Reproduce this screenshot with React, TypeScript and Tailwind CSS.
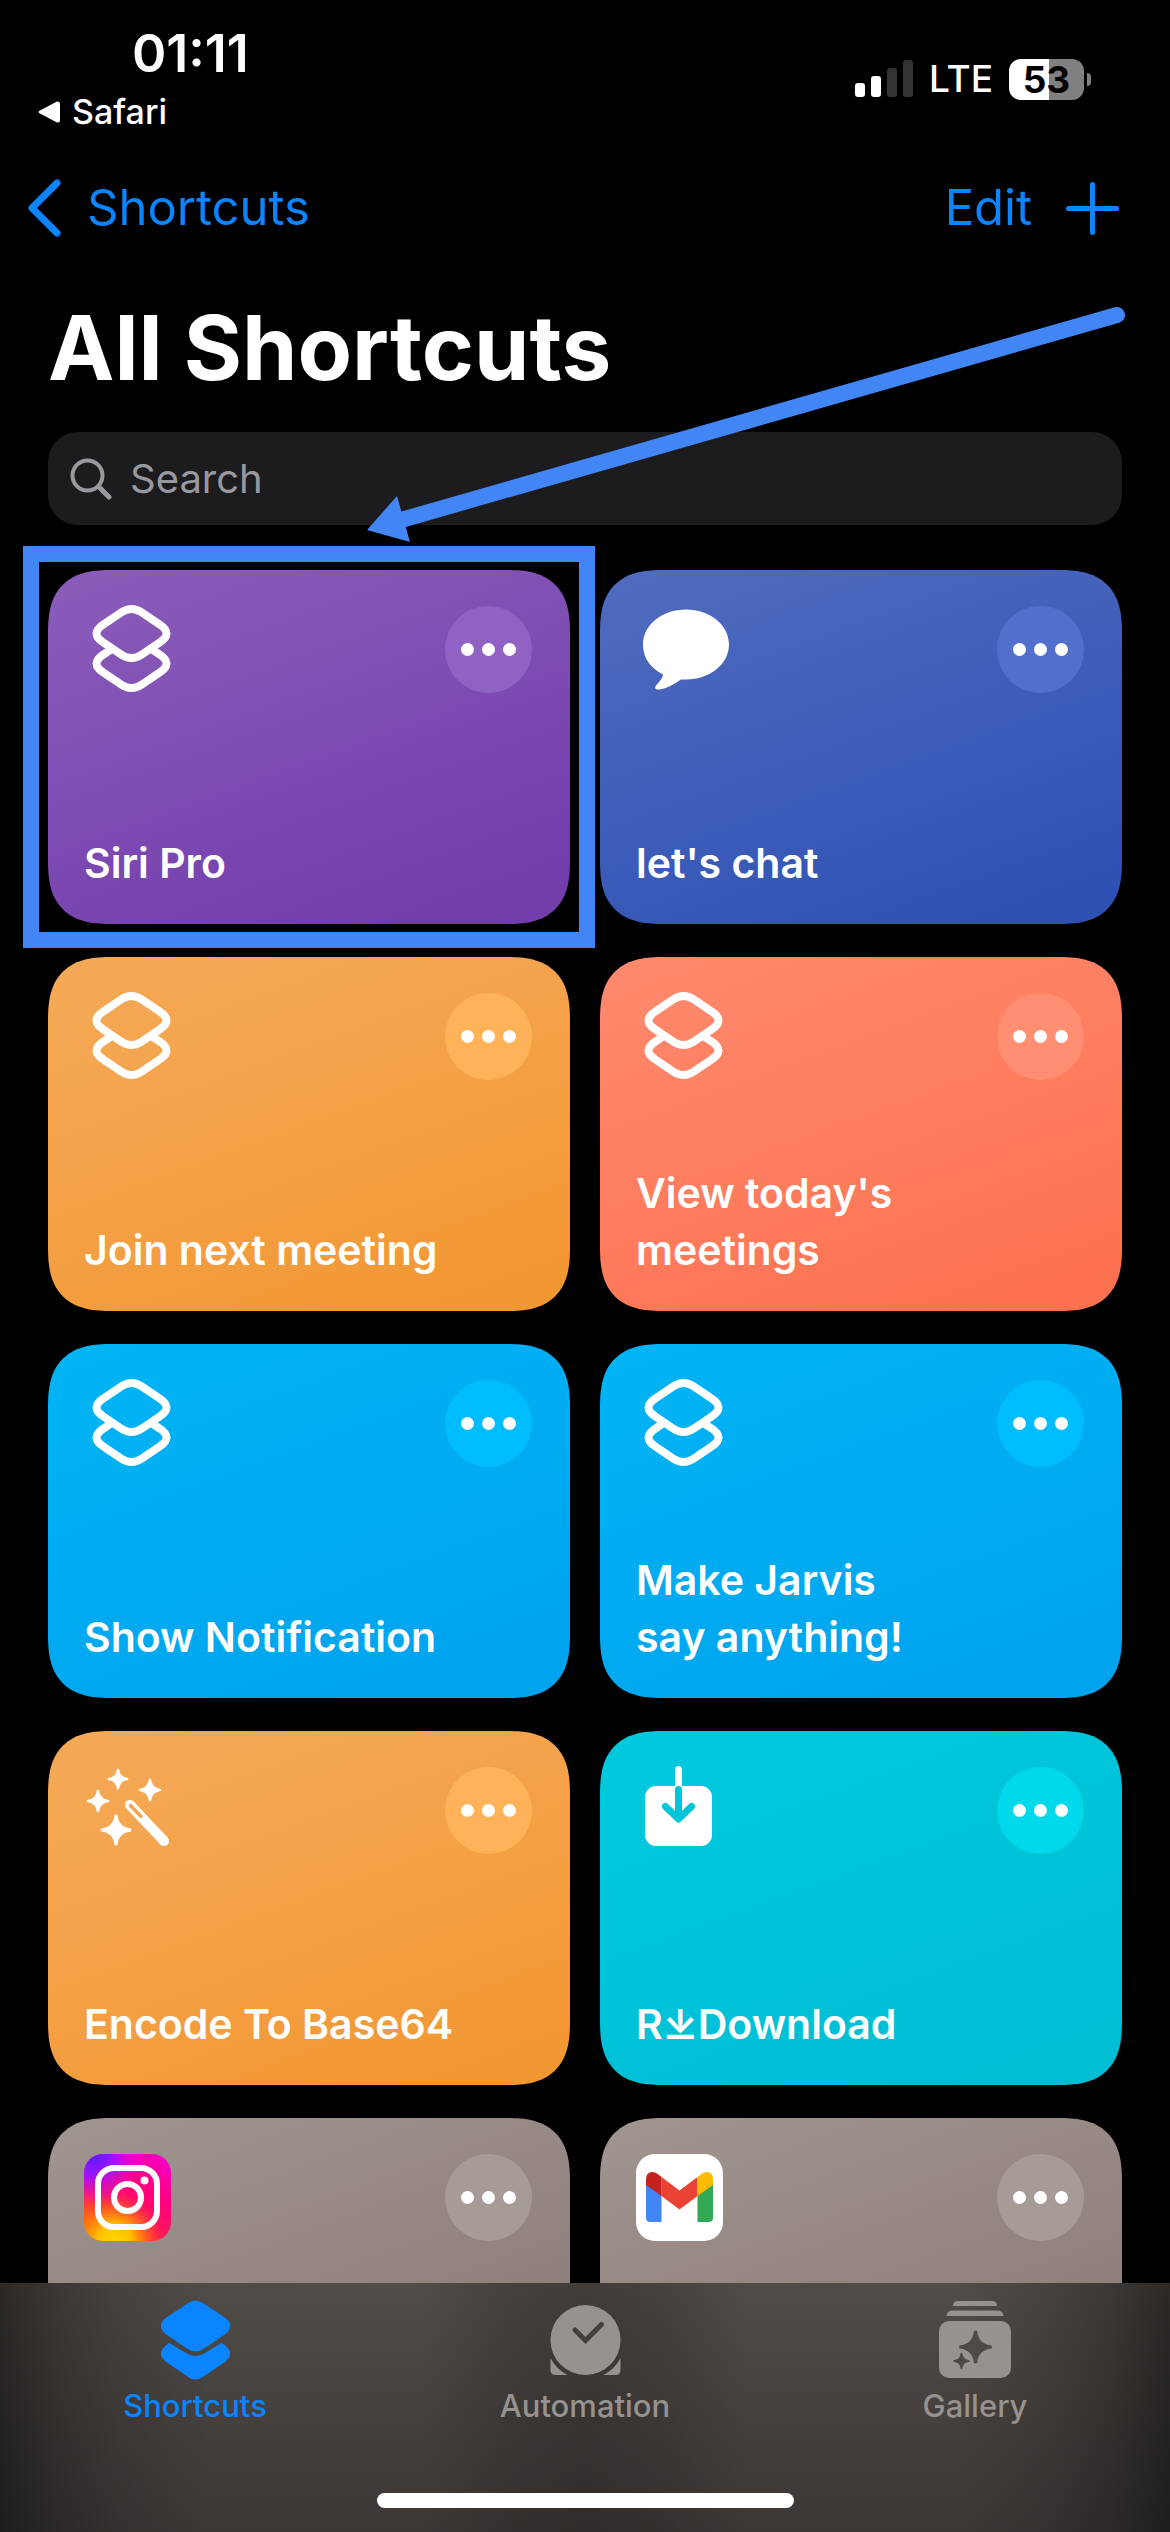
import type { ReactNode } from "react";

function star(cx: number, cy: number, r: number) {
  const k = r * 0.18;
  const e = r * 0.1;
  return `M${cx - e} ${cy - r} Q${cx} ${cy - r * 1.06} ${cx + e} ${cy - r} Q${cx + k} ${cy - k} ${cx + r} ${cy - e} Q${cx + r * 1.06} ${cy} ${cx + r} ${cy + e} Q${cx + k} ${cy + k} ${cx + e} ${cy + r} Q${cx} ${cy + r * 1.06} ${cx - e} ${cy + r} Q${cx - k} ${cy + k} ${cx - r} ${cy + e} Q${cx - r * 1.06} ${cy} ${cx - r} ${cy - e} Q${cx - k} ${cy - k} ${cx - e} ${cy - r}Z`;
}

function LayersIcon() {
  return (
    <svg viewBox="0 0 87 87" className="size-[87px] overflow-visible" fill="none" stroke="white" strokeWidth="8" aria-hidden="true">
      <path d="M37.500 6.300Q47.500-.4 57.500 6.300L76 18.800Q89 27.500 76 36.200L57.500 48.700Q47.500 55.400 37.500 48.700L19 36.200Q6 27.500 19 18.800Z" />
      <path d="M27 43.500L19 48.800Q6 57.500 19 66.200L37.500 78.700Q47.500 85.400 57.500 78.700L76 66.200Q89 57.500 76 48.800L68 43.500" />
    </svg>
  );
}

function BubbleIcon() {
  return (
    <svg viewBox="0 0 87 87" className="size-[87px] overflow-visible" fill="white" aria-hidden="true">
      <path d="M50 3.5C74 3.5 93 19 93 38.5S74 73.5 50 73.5Q47 73.5 45 73.4Q33 82 24 83.4Q17 84 20 79.5Q27 72 27 68.5Q7 58 7 38.5C7 19 26 3.5 50 3.5Z" />
    </svg>
  );
}

function WandIcon() {
  return (
    <svg viewBox="0 0 87 87" className="size-[87px] overflow-visible" fill="white" aria-hidden="true">
      <path d={star(32, 63, 15)} />
      <path d={star(14, 34, 11)} />
      <path d={star(34, 12, 10)} />
      <path d={star(66, 23, 11)} />
      <path d="M46 38L80 74" stroke="white" strokeWidth="10" strokeLinecap="round" />
      <path d="M46.500 38.500L57 49.500" stroke="#f4a551" strokeWidth="3.500" strokeLinecap="round" />
    </svg>
  );
}

function DownloadIcon() {
  return (
    <svg viewBox="0 0 87 87" className="size-[87px] overflow-visible" fill="none" strokeWidth="7" strokeLinecap="round" strokeLinejoin="round" aria-hidden="true">
      <path d="M42.500 2.500V24" stroke="white" />
      <rect x="9" y="19" width="67" height="60" rx="11" fill="white" />
      <path d="M42.500 22.500V51M29.500 39.500L42.500 52L55.500 39.500" stroke="#00c5da" />
    </svg>
  );
}

function InstagramIcon() {
  return (
    <svg viewBox="0 0 87 87" className="size-[87px]" aria-hidden="true">
      <defs>
        <linearGradient id="igBase" x1="0.1" y1="1" x2="0.8" y2="0">
          <stop offset="0" stopColor="#ff7a00" />
          <stop offset="0.4" stopColor="#ff1a55" />
          <stop offset="0.7" stopColor="#ff0080" />
          <stop offset="1" stopColor="#f500c0" />
        </linearGradient>
        <radialGradient id="igYellow" cx="0.35" cy="1" r="0.55">
          <stop offset="0" stopColor="#ffd600" />
          <stop offset="0.35" stopColor="#ffc000" />
          <stop offset="1" stopColor="#ff6000" stopOpacity="0" />
        </radialGradient>
        <radialGradient id="igViolet" cx="0.1" cy="0" r="0.6">
          <stop offset="0" stopColor="#5a1cff" />
          <stop offset="0.4" stopColor="#9a14ff" />
          <stop offset="1" stopColor="#f000d8" stopOpacity="0" />
        </radialGradient>
      </defs>
      <rect width="87" height="87" rx="19" fill="url(#igBase)" />
      <rect width="87" height="87" rx="19" fill="url(#igViolet)" />
      <rect width="87" height="87" rx="19" fill="url(#igYellow)" />
      <rect x="14" y="14" width="59" height="59" rx="16" fill="none" stroke="white" strokeWidth="6" />
      <circle cx="43.500" cy="43.500" r="13.500" fill="none" stroke="white" strokeWidth="6" />
      <circle cx="60.500" cy="26.500" r="4" fill="white" />
    </svg>
  );
}

function GmailIcon() {
  return (
    <svg viewBox="0 0 87 87" className="size-[87px]" aria-hidden="true">
      <rect width="87" height="87" rx="19" fill="white" />
      <path d="M10 30L25.500 41V68H14.500Q10 68 10 63.500Z" fill="#4285f4" />
      <path d="M77 30L61.500 41V68H72.500Q77 68 77 63.500Z" fill="#34a853" />
      <path d="M25.500 23L43.500 36.500L61.500 23V42L43.500 55.500L25.500 42Z" fill="#ea4335" />
      <path d="M10 31V25Q10 19 15.500 18Q18.500 17.700 21 19.600L25.500 23V42Z" fill="#c5221f" />
      <path d="M77 31V25Q77 19 71.500 18Q68.500 17.700 66 19.600L61.500 23V42Z" fill="#fbbc04" />
    </svg>
  );
}

type Shortcut = { name: string; icon: ReactNode; card: string; more: string; marked?: boolean };

const shortcuts: Shortcut[] = [
  { name: "Siri Pro", icon: <LayersIcon />, card: "from-[#8b5dba] to-[#723cab]", more: "bg-[#9062c4]", marked: true },
  { name: "let's chat", icon: <BubbleIcon />, card: "from-[#506cbf] to-[#3051b4]", more: "bg-[#5270cb]" },
  { name: "Join next meeting", icon: <LayersIcon />, card: "from-[#f5aa58] to-[#f29833]", more: "bg-[#ffb257]" },
  { name: "View today's\nmeetings", icon: <LayersIcon />, card: "from-[#ff8a6e] to-[#fc7250]", more: "bg-[#ff8e72]" },
  { name: "Show Notification", icon: <LayersIcon />, card: "from-[#02b5f5] to-[#00a3ee]", more: "bg-[#00bdff]" },
  { name: "Make Jarvis\nsay anything!", icon: <LayersIcon />, card: "from-[#02b5f5] to-[#00a3ee]", more: "bg-[#00bdff]" },
  { name: "Encode To Base64", icon: <WandIcon />, card: "from-[#f5aa58] to-[#f29833]", more: "bg-[#ffb257]" },
  { name: "R⤓Download", icon: <DownloadIcon />, card: "from-[#00cade] to-[#00bdd4]", more: "bg-[#00d8eb]" },
  { name: "", icon: <InstagramIcon />, card: "from-[#a09590] to-[#887874]", more: "bg-[#a79b97]" },
  { name: "", icon: <GmailIcon />, card: "from-[#a09590] to-[#887874]", more: "bg-[#a79b97]" },
];

function ShortcutCard({ name, icon, card, more, marked }: Shortcut) {
  return (
    <article className={`relative flex min-h-[354px] flex-col justify-between rounded-[52px] bg-linear-160 supports-[corner-shape:squircle]:rounded-[64px] supports-[corner-shape:squircle]:[corner-shape:superellipse(1.4)] ${card} to-90% pt-9 pr-[38px] pb-8 pl-9`}>
      <div className="flex items-start justify-between">
        {icon}
        <button type="button" aria-label="More options" className={`flex size-[87px] items-center justify-center gap-2 rounded-full ${more}`}>
          <span className="size-[13px] rounded-full bg-white" />
          <span className="size-[13px] rounded-full bg-white" />
          <span className="size-[13px] rounded-full bg-white" />
        </button>
      </div>
      <h2 className="text-[41px] leading-[57px] font-semibold whitespace-pre-line text-white">{name}</h2>
      {marked && <div className="pointer-events-none absolute -inset-x-[25px] -inset-y-[24px] border-16 border-[#4285f4]" />}
    </article>
  );
}

function StatusBar() {
  return (
    <div className="flex items-start justify-between pt-6 pr-[79px] pl-[38px] text-white">
      <div className="flex flex-col gap-2">
        <div className="pl-[94px] text-[52px] leading-[60px] font-semibold">01:11</div>
        <a href="#safari" className="flex items-center gap-3 text-[34px] leading-10 font-medium">
          <svg viewBox="0 0 22 22" className="size-[22px]" fill="white" aria-hidden="true">
            <path d="M2 9.500L18.500.8Q22-.5 22 3V19Q22 22.500 18.500 21.200L2 12.500Q-1 11 2 9.500Z" />
          </svg>
          Safari
        </a>
      </div>
      <div className="flex items-center pt-8">
        <svg viewBox="0 0 58 38" className="h-[38px] w-[58px]" aria-label="Signal: 2 of 4 bars">
          <rect x="0" y="23" width="10" height="14" rx="3" fill="white" />
          <rect x="16" y="16" width="10" height="21" rx="3" fill="white" />
          <rect x="32" y="8" width="10" height="29" rx="3" fill="#333" />
          <rect x="48" y="0" width="10" height="37" rx="3" fill="#333" />
        </svg>
        <span className="pl-4 text-[37px] leading-[46px] font-medium">LTE</span>
        <div className="ml-4 flex items-center gap-[3px]">
          <div className="flex h-[41px] w-[75px] items-center justify-center rounded-[12px] bg-linear-to-r from-white from-53% to-[#808080] to-53% text-[37px] leading-[41px] font-bold text-black">53</div>
          <div className="h-[13px] w-1 rounded-r-full bg-[#808080]" />
        </div>
      </div>
    </div>
  );
}

function PointerArrow() {
  return (
    <svg viewBox="0 0 762 240" className="pointer-events-none absolute -top-[127px] -right-[5px] h-[240px] w-[762px]" aria-hidden="true">
      <path d="M752 10L36 215" stroke="#4285f4" strokeWidth="16" strokeLinecap="round" />
      <path d="M2 225L32 191L45 237Z" fill="#4285f4" />
    </svg>
  );
}

function TabBar() {
  const tab = "flex flex-col items-center gap-2 pt-[17px] text-[31px] leading-9 font-medium";
  return (
    <nav className="relative z-10 shrink-0 bg-linear-to-b from-[#524c48] to-[#3b3735]">
      <div className="bg-[linear-gradient(90deg,#0007_0%,#0004_5%,#0002_10%,#0000_18%,#0000_36%,#0002_43%,#0003_50%,#0002_57%,#0000_64%,#0000_82%,#0002_90%,#0004_95%,#0007_100%)]">
        <div className="grid h-[210px] grid-cols-3 items-start">
          <a href="#shortcuts" aria-current="page" className={`${tab} text-[#0a84ff]`}>
            <svg viewBox="0 0 69 79" className="h-20 w-[69px]" fill="currentColor" aria-hidden="true">
              <path d="M25 4Q34.500-3.500 44 4L64.500 17.500Q74 25.500 64.500 33.500L44 47.500Q34.500 54.500 25 47.500L4.500 33.500Q-5 25.500 4.500 17.500Z" />
              <path d="M8.300 42.300L4.500 45.300Q-5 53.500 4.500 61L25 75Q34.500 83 44 75L64.500 61Q74 53.500 64.500 45.300L60.700 42.300L44 52.500Q34.500 58.500 25 52.500Z" />
            </svg>
            Shortcuts
          </a>
          <a href="#automation" className={`${tab} text-[#969290]`}>
            <svg viewBox="0 0 71 80" className="h-20 w-[71px]" fill="currentColor" aria-hidden="true">
              <path d="M.5 58V70Q.5 75 5.500 75H17.500Q6 69 .5 58Z" />
              <path d="M70.500 58V70Q70.500 75 65.500 75H53.500Q65 69 70.500 58Z" />
              <circle cx="35.500" cy="40" r="35" />
              <path d="M25 30L35.500 40.500L51.500 24.500" fill="none" stroke="#45403e" strokeWidth="5" strokeLinecap="round" />
            </svg>
            Automation
          </a>
          <a href="#gallery" className={`${tab} text-[#969290]`}>
            <svg viewBox="0 0 72 80" className="h-20 w-[72px]" fill="currentColor" aria-hidden="true">
              <path d="M14 6Q14 1 19 1H53Q58 1 58 6Z" />
              <path d="M7.500 16Q8 10.500 14 10.500H58Q64 10.500 64.500 16Z" />
              <rect x="0" y="21" width="72" height="57" rx="10" />
              <path d={star(36.5, 47, 16)} fill="#4f4a47" />
              <path d={star(22.5, 61, 8)} fill="#4f4a47" />
            </svg>
            Gallery
          </a>
        </div>
        <div className="flex justify-center pb-6">
          <div className="h-[15px] w-[417px] rounded-full bg-white" />
        </div>
      </div>
    </nav>
  );
}

export default function App() {
  return (
    <div className="flex h-screen flex-col overflow-hidden bg-black font-['Inter',sans-serif]">
      <main className="min-h-0 flex-1 overflow-hidden">
        <StatusBar />
        <header className="mt-8 flex h-[88px] items-center justify-between pr-[51px] pl-7 text-[#0a84ff]">
          <a href="#back" className="flex items-center gap-[26px] text-[49px] leading-[60px]">
            <svg viewBox="0 0 33 58" className="h-[58px] w-[33px]" fill="none" stroke="currentColor" strokeWidth="7" strokeLinecap="round" strokeLinejoin="round" aria-hidden="true">
              <path d="M29 4L4 29L29 54" />
            </svg>
            Shortcuts
          </a>
          <div className="flex items-center gap-[34px]">
            <button type="button" className="text-[49px] leading-[60px]">Edit</button>
            <button type="button" aria-label="New shortcut">
              <svg viewBox="0 0 53 53" className="size-[53px]" fill="none" stroke="currentColor" strokeWidth="5" strokeLinecap="round" aria-hidden="true">
                <path d="M26.500 2.500V50.500M2.500 26.500H50.500" />
              </svg>
            </button>
          </div>
        </header>
        <div className="px-12">
          <h1 className="mt-[41px] text-[89px] leading-[110px] font-bold text-white">All Shortcuts</h1>
          <div className="relative mt-[29px]">
            <label className="flex h-[93px] items-center gap-[18px] rounded-[30px] bg-[#1c1c1e] pl-[22px]">
              <svg viewBox="0 0 42 42" className="size-[42px]" fill="none" stroke="#98989f" strokeLinecap="round" aria-hidden="true">
                <circle cx="17.500" cy="17.500" r="15" strokeWidth="4" />
                <path d="M28.500 28.500L39 39" strokeWidth="5" />
              </svg>
              <input type="search" placeholder="Search" aria-label="Search" className="min-w-0 flex-1 bg-transparent text-[40px] text-white outline-none placeholder:text-[#98989f]" />
            </label>
            <PointerArrow />
          </div>
          <section className="mt-[45px] grid grid-cols-2 gap-x-[30px] gap-y-[33px]">
            {shortcuts.map((s, i) => (
              <ShortcutCard key={i} {...s} />
            ))}
          </section>
        </div>
      </main>
      <TabBar />
    </div>
  );
}
